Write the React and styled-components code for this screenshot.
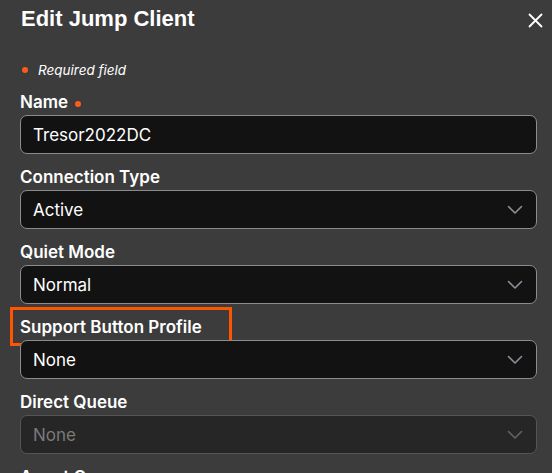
import React from "react";
import styled, { createGlobalStyle } from "styled-components";

const GlobalStyle = createGlobalStyle`
  html, body {
    margin: 0;
    padding: 0;
    background: #3c3c3c;
    overflow: hidden;
  }
  body {
    font-family: Inter, "Noto Sans", "Liberation Sans", sans-serif;
    color: #ffffff;
  }
`;

const Panel = styled.div`
  width: 552px;
  height: 473px;
  box-sizing: border-box;
  padding: 4px 15px 0 20px;
  background: #3c3c3c;
  overflow: hidden;
`;

const Header = styled.div`
  display: flex;
  align-items: flex-start;
  justify-content: space-between;
`;

const Title = styled.h2`
  margin: 0 0 0 1px;
  font-family: "Liberation Sans", Arial, sans-serif;
  font-size: 22px;
  line-height: 30px;
  font-weight: 700;
  color: #ffffff;
`;

const CloseButton = styled.button`
  display: flex;
  align-items: center;
  justify-content: center;
  width: 16px;
  height: 16px;
  margin: 8px -6px 0 0;
  padding: 0;
  border: none;
  background: none;
  color: #ffffff;
  cursor: pointer;
`;

const RequiredNote = styled.div`
  display: flex;
  align-items: center;
  gap: 10px;
  margin: 28px 0 14px 2px;
  font-size: 13.5px;
  line-height: 16px;
  font-style: italic;
  color: #ffffff;
`;

const Dot = styled.span`
  display: inline-block;
  width: 6px;
  height: 6px;
  border-radius: 50%;
  background: #ff5a1a;
  flex-shrink: 0;
  margin-top: ${(p) => (p.low ? "4px" : "0")};
`;

const Field = styled.div`
  display: flex;
  flex-direction: column;
  gap: 3px;
  margin-bottom: 13px;
`;

const LabelWrap = styled.div`
  position: relative;
  display: flex;
  align-items: center;
  gap: 7px;
`;

const Label = styled.label`
  font-size: 17px;
  line-height: 20px;
  font-weight: 600;
  color: #ffffff;
`;

const Highlight = styled.span`
  position: absolute;
  left: -10px;
  top: -10px;
  width: 222px;
  height: 39px;
  box-sizing: border-box;
  border: 3px solid #ff5500;
  pointer-events: none;
`;

const Box = styled.div`
  position: relative;
  display: flex;
  align-items: center;
  height: 39px;
  box-sizing: border-box;
  padding: 0 12px;
  border: 1px solid ${(p) => (p.disabled ? "#555555" : "#8c8c8c")};
  border-radius: 7px;
  background: ${(p) => (p.disabled ? "#262626" : "#121212")};
  color: ${(p) => (p.disabled ? "#7a7a7a" : "#ffffff")};
  font-size: 17px;
`;

const Value = styled.span`
  flex: 1;
`;

const Chevron = styled.svg`
  width: 16px;
  height: 10px;
  margin-right: 1px;
  color: ${(p) => (p.disabled ? "#5d636b" : "#8b9199")};
`;

const fields = [
  { label: "Connection Type", value: "Active" },
  { label: "Quiet Mode", value: "Normal" },
  { label: "Support Button Profile", value: "None", highlight: true },
  { label: "Direct Queue", value: "None", disabled: true },
  { label: "Agent Queue", value: "None" },
];

const SelectBox = ({ value, disabled }) => (
  <Box disabled={disabled}>
    <Value>{value}</Value>
    <Chevron disabled={disabled} viewBox="0 0 16 10" fill="none">
      <path d="M1.5 1.5 L8 8 L14.5 1.5" stroke="currentColor" strokeWidth="1.6" strokeLinecap="round" strokeLinejoin="round" />
    </Chevron>
  </Box>
);

export default function App() {
  return (
    <>
      <GlobalStyle />
      <Panel>
        <Header>
          <Title>Edit Jump Client</Title>
          <CloseButton aria-label="Close">
            <svg width="15" height="15" viewBox="0 0 15 15" fill="none">
              <path d="M1 1 L14 14 M14 1 L1 14" stroke="currentColor" strokeWidth="1.8" />
            </svg>
          </CloseButton>
        </Header>
        <RequiredNote>
          <Dot />
          Required field
        </RequiredNote>
        <Field>
          <LabelWrap>
            <Label>Name</Label>
            <Dot low />
          </LabelWrap>
          <Box>
            <Value>Tresor2022DC</Value>
          </Box>
        </Field>
        {fields.map((f) => (
          <Field key={f.label}>
            <LabelWrap>
              <Label>{f.label}</Label>
              {f.highlight && <Highlight />}
            </LabelWrap>
            <SelectBox value={f.value} disabled={f.disabled} />
          </Field>
        ))}
      </Panel>
    </>
  );
}
